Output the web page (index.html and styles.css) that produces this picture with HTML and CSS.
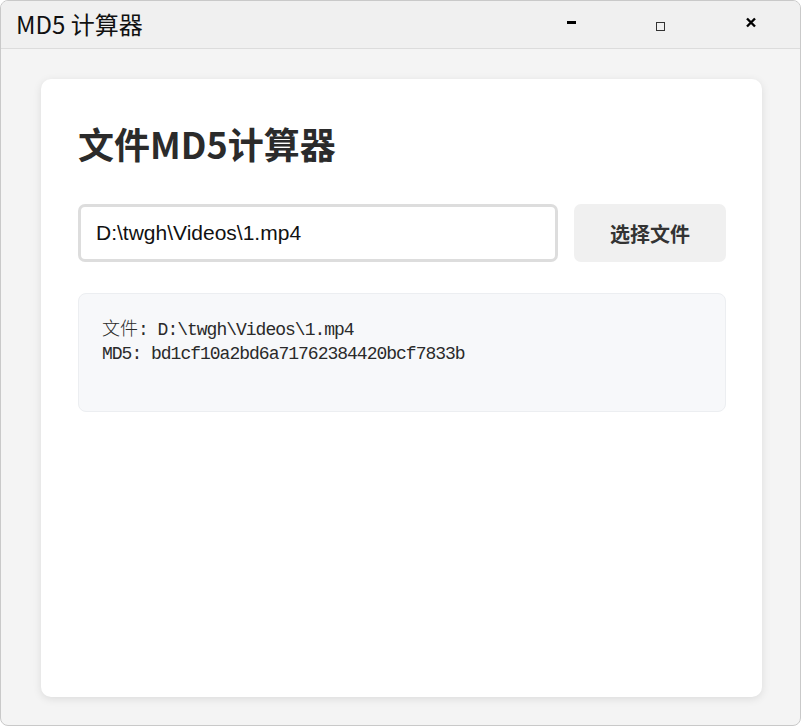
FILE: index.html
```html
<!DOCTYPE html>
<html lang="zh-CN">
<head>
<meta charset="utf-8">
<title>MD5 计算器</title>
<link rel="stylesheet" href="styles.css">
</head>
<body>
<div class="window">
  <header class="titlebar">
    <div class="app-title">MD5 计算器</div>
    <div class="controls">
      <span class="ctl ctl-min"><svg width="12" height="12" viewBox="0 0 12 12"><rect x="1" y="4" width="9" height="3" fill="#000"/></svg></span>
      <span class="ctl ctl-max"><svg width="12" height="12" viewBox="0 0 12 12"><rect x="1.5" y="2.5" width="8" height="8" fill="none" stroke="#333" stroke-width="1"/></svg></span>
      <span class="ctl ctl-close"><svg width="12" height="12" viewBox="0 0 12 12"><path d="M2 1.5 L10 9.5 M10 1.5 L2 9.5" stroke="#000" stroke-width="2.4" stroke-linecap="butt"/></svg></span>
    </div>
  </header>
  <main class="content">
    <section class="card">
      <h1 class="heading">文件MD5计算器</h1>
      <div class="picker">
        <input class="path-input" type="text" value="D:\twgh\Videos\1.mp4" readonly>
        <button class="pick-btn" type="button">选择文件</button>
      </div>
      <div class="result">
        <div class="result-line"><span class="cjk">文件</span>: D:\twgh\Videos\1.mp4</div>
        <div class="result-line">MD5: bd1cf10a2bd6a71762384420bcf7833b</div>
      </div>
    </section>
  </main>
</div>
</body>
</html>
```
FILE: styles.css
```css
html, body {
  margin: 0;
  padding: 0;
  background: #ffffff;
}
body {
  width: 801px;
  height: 726px;
  overflow: hidden;
  font-family: "Noto Sans CJK SC", "Liberation Sans", sans-serif;
}
.window {
  box-sizing: border-box;
  width: 801px;
  height: 726px;
  border: 1px solid #c9c9c9;
  border-radius: 8px;
  background: #f4f4f4;
  display: flex;
  flex-direction: column;
  overflow: hidden;
}
.titlebar {
  height: 47px;
  flex: 0 0 47px;
  background: #f0f0f0;
  border-bottom: 1px solid #dcdcdc;
  display: flex;
  align-items: center;
  justify-content: space-between;
}
.app-title {
  padding-left: 15px;
  font-family: "Noto Sans CJK SC", sans-serif;
  font-size: 24px;
  color: #111;
  line-height: 1;
  margin-top: -1px;
}
.controls {
  display: flex;
  height: 100%;
  align-items: center;
}
.ctl {
  width: 90px;
  display: flex;
  justify-content: center;
  align-items: center;
  height: 100%;
}
.ctl svg { display: block; }
.ctl-min svg { margin-top: -3px; margin-left: 1px; }
.ctl-max svg { margin-top: 2px; }
.ctl-close svg { margin-top: -3px; margin-left: -5px; }
.controls .ctl-close { width: 94px; }
.content {
  flex: 1;
  padding: 30px 38px 28px 40px;
  display: flex;
}
.card {
  flex: 1;
  background: #ffffff;
  border-radius: 10px;
  box-shadow: 0 2px 8px rgba(0, 0, 0, 0.10);
  padding: 40px 36px 36px 37px;
  display: flex;
  flex-direction: column;
}
.heading {
  margin: 0;
  font-family: "Noto Sans CJK SC", sans-serif;
  font-weight: 700;
  font-size: 36px;
  line-height: 48px;
  color: #2b2b2b;
}
.picker {
  display: flex;
  gap: 16px;
  margin-top: 37px;
  height: 58px;
}
.path-input {
  box-sizing: border-box;
  width: 480px;
  height: 58px;
  border: 3px solid #dddddd;
  border-radius: 7px;
  padding: 0 15px;
  font-family: "Liberation Sans", Arial, sans-serif;
  font-size: 21px;
  color: #111;
  background: #fff;
  outline: none;
}
.pick-btn {
  flex: 1;
  height: 58px;
  border: none;
  border-radius: 7px;
  background: #f0f0f0;
  font-family: "Noto Sans CJK SC", sans-serif;
  font-weight: 700;
  font-size: 20px;
  color: #333;
  padding: 0;
}
.result {
  box-sizing: border-box;
  margin-top: 31px;
  height: 119px;
  background: #f7f8fa;
  border: 1px solid #eceef1;
  border-radius: 8px;
  padding: 21px 23px;
}
.result-line {
  font-family: "Liberation Mono", "Noto Sans CJK SC", monospace;
  font-size: 18px;
  letter-spacing: -1px;
  line-height: 24px;
  color: #2a2a2a;
  white-space: pre;
}
.cjk {
  font-family: "Noto Sans CJK SC", sans-serif;
  font-size: 18px;
  letter-spacing: 0;
  font-weight: 300;
}
```
